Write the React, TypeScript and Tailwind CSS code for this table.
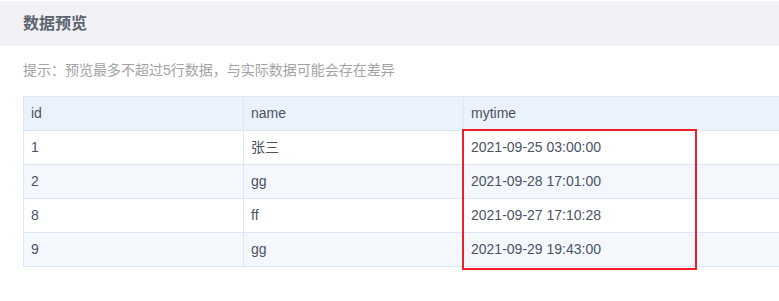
const ROWS = [
  { id: '1', name: '张三', mytime: '2021-09-25 03:00:00' },
  { id: '2', name: 'gg', mytime: '2021-09-28 17:01:00' },
  { id: '8', name: 'ff', mytime: '2021-09-27 17:10:28' },
  { id: '9', name: 'gg', mytime: '2021-09-29 19:43:00' },
];

const FONT = { fontFamily: '"Liberation Sans", Arial, "Noto Sans CJK SC", sans-serif' };

export default function App() {
  return (
    <div className="w-[779px] h-[301px] bg-white overflow-hidden" style={FONT}>
      <div className="mt-px h-[45px] bg-[#f0f2f5] flex items-center px-[23px]">
        <h2 className="text-[16px] font-bold text-[#5c6470]">数据预览</h2>
      </div>

      <div className="px-[23px] pt-[16px] pb-[17px] text-[14px] leading-[17px] text-[#a3a3a3]">
        提示：预览最多不超过5行数据，与实际数据可能会存在差异
      </div>

      <div className="relative ml-[23px]">
        <table className="w-[800px] border-collapse text-[14px] text-[#4a5265] table-fixed">
          <colgroup>
            <col className="w-[220px]" />
            <col className="w-[220px]" />
            <col />
          </colgroup>
          <thead>
            <tr className="h-[34px] bg-[#eaf2fd] border-t border-[#e3e6ea]">
              <th className="text-left font-normal pl-[7px] border-l border-r border-[#dde8f6]">id</th>
              <th className="text-left font-normal pl-[7px] border-r border-[#dde8f6]">name</th>
              <th className="text-left font-normal pl-[7px]">mytime</th>
            </tr>
          </thead>
          <tbody>
            {ROWS.map((r, i) => (
              <tr key={i} className={`h-[34px] border-t border-b border-[#d9e6f7] ${i % 2 ? 'bg-[#f4f8fd]' : 'bg-white'}`}>
                <td className="pl-[7px] border-l border-r border-[#d9e6f7]">{r.id}</td>
                <td className="pl-[7px] border-r border-[#d9e6f7]">{r.name}</td>
                <td className="pl-[7px]">{r.mytime}</td>
              </tr>
            ))}
          </tbody>
        </table>
        <div className="absolute left-[439px] top-[33px] w-[235px] h-[141px] border-[2px] border-[#ee1f26] pointer-events-none" />
      </div>
    </div>
  );
}
